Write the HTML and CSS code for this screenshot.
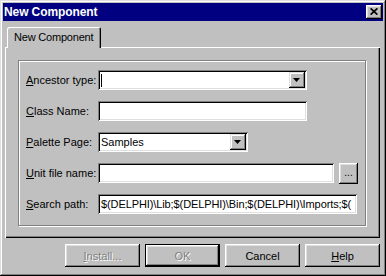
FILE: index.html
```html
<!DOCTYPE html>
<html>
<head>
  <meta charset="UTF-8">
  <title>New Component</title>
  <link rel="stylesheet" href="styles.css">
</head>
<body>
  <div class="window">
    <div class="titlebar">
      <span class="title">New Component</span>
      <span class="close">
        <svg width="8" height="7" viewBox="0 0 8 7"><path d="M0.6 0.4 L7.4 6.6 M7.4 0.4 L0.6 6.6" stroke="#000" stroke-width="1.7"/></svg>
      </span>
    </div>
    <div class="content">
      <div class="tabs">
        <div class="tab">New Component</div>
      </div>
      <div class="panel">
        <div class="group">
          <div class="row">
            <label><u>A</u>ncestor type:</label>
            <div class="field combo ancestor">
              <span class="caret"></span>
              <span class="drop"><svg width="7" height="4" viewBox="0 0 7 4"><path d="M0 0h7L3.5 4z" fill="#000"/></svg></span>
            </div>
          </div>
          <div class="row">
            <label><u>C</u>lass Name:</label>
            <div class="field classname"></div>
          </div>
          <div class="row">
            <label><u>P</u>alette Page:</label>
            <div class="field combo palette">
              <span class="value">Samples</span>
              <span class="drop"><svg width="7" height="4" viewBox="0 0 7 4"><path d="M0 0h7L3.5 4z" fill="#000"/></svg></span>
            </div>
          </div>
          <div class="row">
            <label><u>U</u>nit file name:</label>
            <div class="field unitfile"></div>
            <span class="browse">...</span>
          </div>
          <div class="row">
            <label><u>S</u>earch path:</label>
            <div class="field searchpath"><span class="value path">$(DELPHI)\Lib;$(DELPHI)\Bin;$(DELPHI)\Imports;$(</span></div>
          </div>
        </div>
      </div>
      <div class="buttons">
        <span class="btn disabled"><u>I</u>nstall...</span>
        <span class="btn default disabled">OK</span>
        <span class="btn">Cancel</span>
        <span class="btn"><u>H</u>elp</span>
      </div>
    </div>
  </div>
</body>
</html>
```

FILE: styles.css
```css
body {
  margin: 0;
  padding: 0;
  background-color: #c0c0c0;
  font-family: "Liberation Sans", Arial, sans-serif;
  font-size: 11px;
  color: #000;
}

.window {
  width: 386px;
  height: 276px;
  box-sizing: border-box;
  padding: 3px;
  background-color: #c0c0c0;
  box-shadow: inset -1px -1px #000, inset 1px 1px #dfdfdf, inset -2px -2px #808080, inset 2px 2px #fff;
}

.titlebar {
  height: 18px;
  background-color: #000080;
  display: flex;
  align-items: center;
  padding-left: 1px;
}

.title {
  color: #fff;
  font-weight: bold;
  font-size: 12px;
  letter-spacing: -0.1px;
}

.close {
  margin-left: auto;
  margin-right: 1px;
  width: 16px;
  height: 14px;
  box-sizing: border-box;
  background-color: #c0c0c0;
  box-shadow: inset -1px -1px #000, inset 1px 1px #fff, inset -2px -2px #808080, inset 2px 2px #dfdfdf;
  display: flex;
  align-items: center;
  justify-content: center;
  padding: 0 1px 1px 0;
}

.close svg {
  display: block;
}

.content {
  padding: 6px 3px 0 2px;
}

.tabs {
  display: flex;
  padding-left: 2px;
}

.tab {
  position: relative;
  z-index: 1;
  width: 94px;
  height: 21px;
  margin-bottom: -1px;
  box-sizing: border-box;
  padding: 4px 0 0 7px;
  background-color: #c0c0c0;
  border-radius: 2px 2px 0 0;
  box-shadow: inset 1px 1px #fff, inset -1px 0 #000, inset -2px 0 #808080;
  letter-spacing: -0.2px;
}

.panel {
  height: 191px;
  box-sizing: border-box;
  padding: 13px 14px 0 13px;
  box-shadow: inset 1px 1px #fff, inset -1px -1px #000, inset -2px -2px #808080;
}

.group {
  height: 166px;
  box-sizing: border-box;
  border: 1px solid #808080;
  box-shadow: inset 1px 1px #fff, 1px 1px #fff;
  padding: 9px 7px;
  display: flex;
  flex-direction: column;
  gap: 11px;
}

.row {
  display: flex;
  align-items: center;
  height: 20px;
}

.row label {
  width: 72px;
  white-space: nowrap;
}

.field {
  height: 20px;
  box-sizing: border-box;
  background-color: #fff;
  box-shadow: inset 1px 1px #808080, inset -1px -1px #fff, inset 2px 2px #000, inset -2px -2px #dfdfdf;
  padding: 0 2px 0 3px;
  display: flex;
  align-items: center;
  overflow: hidden;
  white-space: nowrap;
}

.ancestor { width: 209px; }
.classname { width: 209px; }
.palette { width: 150px; }
.unitfile { width: 236px; }
.searchpath { width: 259px; }

.path {
  letter-spacing: -0.1px;
}

.caret {
  width: 1px;
  height: 13px;
  background-color: #000;
}

.drop {
  margin-left: auto;
  width: 16px;
  height: 16px;
  flex-shrink: 0;
  box-sizing: border-box;
  background-color: #c0c0c0;
  box-shadow: inset -1px -1px #000, inset 1px 1px #dfdfdf, inset -2px -2px #808080, inset 2px 2px #fff;
  display: flex;
  align-items: center;
  justify-content: center;
  padding: 0 1px 1px 0;
}

.drop svg {
  display: block;
}

.browse {
  margin-left: 5px;
  width: 19px;
  height: 21px;
  box-sizing: border-box;
  background-color: #c0c0c0;
  box-shadow: inset -1px -1px #000, inset 1px 1px #fff, inset -2px -2px #808080, inset 2px 2px #dfdfdf;
  text-align: center;
  line-height: 19px;
  font-size: 10px;
}

.buttons {
  display: flex;
  justify-content: flex-end;
  gap: 5px;
  margin-top: 6px;
}

.btn {
  width: 75px;
  height: 23px;
  box-sizing: border-box;
  background-color: #c0c0c0;
  box-shadow: inset -1px -1px #000, inset 1px 1px #fff, inset -2px -2px #808080, inset 2px 2px #dfdfdf;
  display: flex;
  align-items: center;
  justify-content: center;
}

.btn.default {
  border: 1px solid #000;
}

.btn.disabled {
  color: #808080;
  text-shadow: 1px 1px #fff;
}
```
